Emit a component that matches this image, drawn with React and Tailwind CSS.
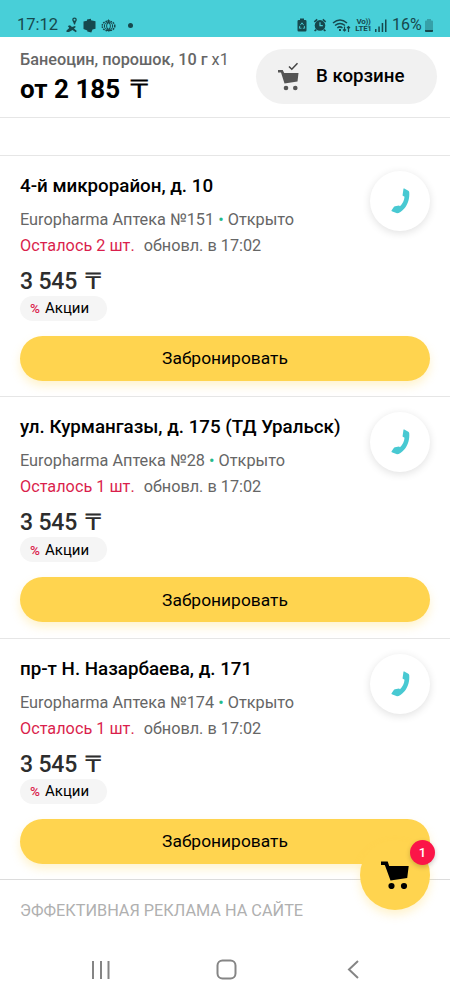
const pharmacies = [
  { id: 1, address: "4-й микрорайон, д. 10", number: 151, left: 2 },
  { id: 2, address: "ул. Курмангазы, д. 175 (ТД Уральск)", number: 28, left: 1 },
  { id: 3, address: "пр-т Н. Назарбаева, д. 171", number: 174, left: 1 },
]

function StatusBar() {
  return (
    <div className="h-[37px] bg-[#48cfd8] flex items-end justify-between pl-[17px] pr-[17px] pb-[3px] text-[#16484d] shrink-0">
      <div className="flex items-center h-[18px]">
        <span className="text-[16.500px] leading-[18px] w-[41px] whitespace-nowrap">17:12</span>
        <svg className="ml-2 w-3 h-4" viewBox="0 0 12 16" fill="currentColor">
          <path fillRule="evenodd" d="M8.500.500a2.300 2.300 0 0 1 2.300 2.300c0 1.400-1.500 2.300-1.700 4.700H8C7.700 5.100 6.200 4.200 6.200 2.800A2.300 2.300 0 0 1 8.500.500zm0 1.300a1 1 0 1 0 0 2 1 1 0 0 0 0-2z" />
          <path d="M1.800 9l2.200-.8L6 10l3-1 .8 1L8 11.500l2.800 2.500-1 1.200L6.500 13 3 15H.5v-1.500L3.300 11z" />
        </svg>
        <svg className="ml-[5px] w-[13px] h-[15px]" viewBox="0 0 13 15" fill="currentColor">
          <path d="M4 1.500l4-.7v1.500l4.500.9v7.500l-3 .7-1.200 3.100-4-.9v-1L.5 11V3.500l3.500-.8z" />
        </svg>
        <svg className="ml-[5px] w-[15px] h-[15px]" viewBox="0 0 15 15" fill="none" stroke="currentColor">
          <ellipse cx="7.500" cy="8" rx="6.300" ry="4.800" strokeWidth="1.500" strokeDasharray="1.600 .9" />
          <ellipse cx="7.500" cy="8" rx="4.100" ry="3.500" />
          <ellipse cx="7.500" cy="8" rx="1.900" ry="3" />
          <path d="M7.500 1.500v3M5 12.500h5M6 3h3" />
        </svg>
        <span className="ml-[12px] w-[5px] h-[5px] rounded-full bg-current" />
      </div>

      <div className="flex items-center h-[18px]">
        <svg className="w-[10px] h-[14px]" viewBox="0 0 10 14">
          <path fill="currentColor" d="M3 .5h4V2h1.300Q9.500 2 9.500 3.300v9Q9.500 13.500 8.300 13.500H1.700Q.5 13.500.5 12.300v-9Q.5 2 1.700 2H3z" />
          <path fill="none" stroke="#48cfd8" strokeWidth=".9" d="M3.300 7.200L5 4.800l1.700 2.400M7.300 8l.4 2.200H5.800M4.500 10.200H2.300L2.800 8" />
        </svg>
        <svg className="ml-[6px] w-[14px] h-[14px]" viewBox="0 0 14 14">
          <path fill="currentColor" d="M.8 3.200L3.700.7l1 1.200-2.900 2.500zM10.300.7l2.900 2.500-1 1.200-2.900-2.500zM2.500 11l1.300 1.200L2.200 13.500 1 12.500zM11.500 11l-1.300 1.200 1.600 1.300 1.200-1z" />
          <circle cx="7" cy="7.400" r="5.300" fill="currentColor" />
          <path d="M7 4.300v3.300h2.800" fill="none" stroke="#48cfd8" strokeWidth="1.200" />
        </svg>
        <svg className="ml-[5px] w-[19px] h-[15px]" viewBox="0 0 19 15" fill="none" stroke="currentColor" strokeWidth="1.500">
          <path d="M1 5q7-6 14 0M3 7.500q5-4 10 0M5.300 10q2.700-2.200 5.200 0" />
          <path d="M7 12h2" strokeWidth="2" />
          <path d="M12.500 8.500v4.500M11 11.500l1.500 1.500 1.500-1.500M16.500 14V8.500M15 10l1.500-1.500L18 10" strokeWidth="1.200" />
        </svg>
        <span className="ml-1 w-[17px] text-center text-[8px] leading-[7px] font-bold tracking-[-0.3px] whitespace-nowrap">
          Vo))
          <br />
          LTE1
        </span>
        <svg className="ml-[3px] w-3 h-[13px]" viewBox="0 0 12 13" fill="currentColor">
          <path d="M0 10h1.500v3H0zM3.300 7.500h1.500V13H3.300zM6.700 4h1.500v9H6.700zM10 .5h1.500V13H10z" />
        </svg>
        <span className="ml-[5px] w-[31px] text-[16px] leading-[18px] whitespace-nowrap">16%</span>
        <svg className="ml-[2px] w-2 h-[13px]" viewBox="0 0 8 13">
          <path fill="#36a0a8" d="M2 0h4v1.500h1q1 0 1 1V12q0 1-1 1H1q-1 0-1-1V2.500q0-1 1-1h1z" />
          <path fill="currentColor" d="M0 11h8v1q0 1-1 1H1q-1 0-1-1z" />
        </svg>
      </div>
    </div>
  )
}

function Header() {
  return (
    <header className="h-[81px] border-b border-[#e6e6e6] pl-5 pr-[13px] flex justify-between shrink-0">
      <div className="pt-[13px]">
        <div className="text-[16.250px] leading-5 text-[#666] whitespace-nowrap">
          <span className="font-medium">Банеоцин, порошок, 10 г</span> x1
        </div>
        <div className="mt-[4px] text-[26px] leading-[30px] font-bold text-black whitespace-nowrap">
          от 2 185 <span className="inline-block font-light origin-left translate-x-[3px] scale-x-[1.3]">₸</span>
        </div>
      </div>
      <button className="mt-[12px] w-[181px] h-[55px] rounded-full bg-[#f1f1f1] flex items-center pl-[22px]">
        <svg className="w-[21px] h-[29px] shrink-0" viewBox="0 0 21 29">
          <path d="M11 4.500l2.800 2.800L19.500 1.300" fill="none" stroke="#444" strokeWidth="1.500" />
          <path d="M0 8h4.700l1.500 3H20.500L19.500 19.500 6.500 21.500 3 10.500H0z" fill="#555" />
          <circle cx="8" cy="26" r="2.300" fill="#555" />
          <circle cx="17.300" cy="26" r="2.300" fill="#555" />
        </svg>
        <span className="ml-[17px] text-[18.700px] font-medium text-black whitespace-nowrap">В корзине</span>
      </button>
    </header>
  )
}

function PharmacyCard({ address, number, left }) {
  return (
    <section className="h-[241.300px] border-t border-[#e6e6e6] px-5 relative shrink-0">
      <h2 className="pt-[18px] text-[18.750px] leading-[24px] font-medium text-black whitespace-nowrap">{address}</h2>
      <p className="mt-[12px] text-[16.300px] leading-5 text-[#666] whitespace-nowrap">
        Europharma Аптека №{number} <span className="text-[#25b98b]">•</span> Открыто
      </p>
      <p className="mt-[6px] text-[16.250px] leading-5 text-[#666] whitespace-nowrap">
        <span className="text-[#da1f4d] mr-[9px]">Осталось {left} шт.</span>
        обновл. в 17:02
      </p>
      <div className="mt-[12px] text-[23px] leading-[27px] tracking-[-0.2px] font-medium text-[#2d2d2d] whitespace-nowrap">
        3 545 <span className="inline-block font-light origin-left translate-x-[2px] scale-x-[1.3]">₸</span>
      </div>
      <div className="mt-[1px] w-[87px] h-[25px] rounded-full bg-[#f5f5f5] flex items-center pl-[10px] text-[15px] text-black">
        <span className="text-[13.500px] font-medium text-[#da1f4d] w-[15px]">%</span>
        <span>Акции</span>
      </div>
      <button className="mt-[15px] w-full h-[45px] rounded-full bg-[#ffd44f] text-[17.400px] text-black shadow-[0_5px_10px_rgba(255,212,79,0.28)] flex items-center justify-center">
        <span className="-translate-y-[0.5px]">Забронировать</span>
      </button>
      <button className="absolute top-[15px] right-5 w-[60px] h-[60px] rounded-full bg-white shadow-[0_2px_9px_rgba(0,0,0,0.12)] flex items-center justify-center">
        <svg className="w-[19px] h-[26px]" viewBox="0 0 19 26" fill="#48c9d2">
          <path d="M12.500.6Q12.800.3 13.300.5L17.300 2.700Q18 3 18.200 4C18.800 10 17 16.500 13.300 20.500 10.500 23.800 8.200 25 6 25.300L.8 23.200Q.2 22.800.6 22.200L3 18.700Q3.300 18.200 4 18.200L8 17.600 9 18.300C11.500 15.800 13.300 12.500 13.500 8.800L11.800 7.800Q11.500 7.500 11.600 7z" />
        </svg>
      </button>
    </section>
  )
}

function CartFab() {
  return (
    <button className="absolute left-[360px] top-[840px] w-[70px] h-[70px] rounded-full bg-[#ffd44f] shadow-[0_5px_10px_rgba(255,212,79,0.28)]">
      <svg className="absolute left-[21px] top-[21px] w-7 h-7" viewBox="0 0 28 28" fill="#000">
        <path d="M0 .5h6.700l1.500 4.500H27.700l-1.500 12L9.500 19.500 4.300 5.200 3.700 4H0z" />
        <circle cx="10.500" cy="25" r="3.100" />
        <circle cx="23" cy="25" r="3.100" />
      </svg>
      <span className="absolute left-[50px] top-0 w-[25px] h-[25px] rounded-full bg-[#fb1548] text-white text-[13px] font-medium flex items-center justify-center shadow-[0_2px_5px_rgba(0,0,0,0.2)]">
        1
      </span>
    </button>
  )
}

function NavBar() {
  return (
    <nav className="mt-[38px] h-[22px] flex items-center shrink-0 pl-[91px]">
      <svg className="w-5 h-5" viewBox="0 0 20 20" stroke="#858585" strokeWidth="2">
        <path d="M2 1v18M10 1v18M17.500 1v18" />
      </svg>
      <svg className="ml-[105px] w-[21px] h-[21px]" viewBox="0 0 21 21" fill="none" stroke="#858585" strokeWidth="2">
        <rect x="1.500" y="1.500" width="18" height="18" rx="5" />
      </svg>
      <svg className="ml-[110px] w-3 h-[19px]" viewBox="0 0 12 19" fill="none" stroke="#858585" strokeWidth="2">
        <path d="M11 1L2 9.500l9 8.500" />
      </svg>
    </nav>
  )
}

export default function App() {
  return (
    <div className="relative w-[450px] h-[1000px] bg-white overflow-hidden flex flex-col font-['Roboto',sans-serif]">
      <StatusBar />
      <Header />
      <div className="h-[37px] shrink-0" />
      {pharmacies.map((p) => (
        <PharmacyCard key={p.id} {...p} />
      ))}
      <div className="border-t border-[#dcdcdc] pt-[21px] pl-5 text-[16.250px] leading-5 text-[#b0b0b0] whitespace-nowrap shrink-0">
        ЭФФЕКТИВНАЯ РЕКЛАМА НА САЙТЕ
      </div>
      <NavBar />
      <CartFab />
    </div>
  )
}
